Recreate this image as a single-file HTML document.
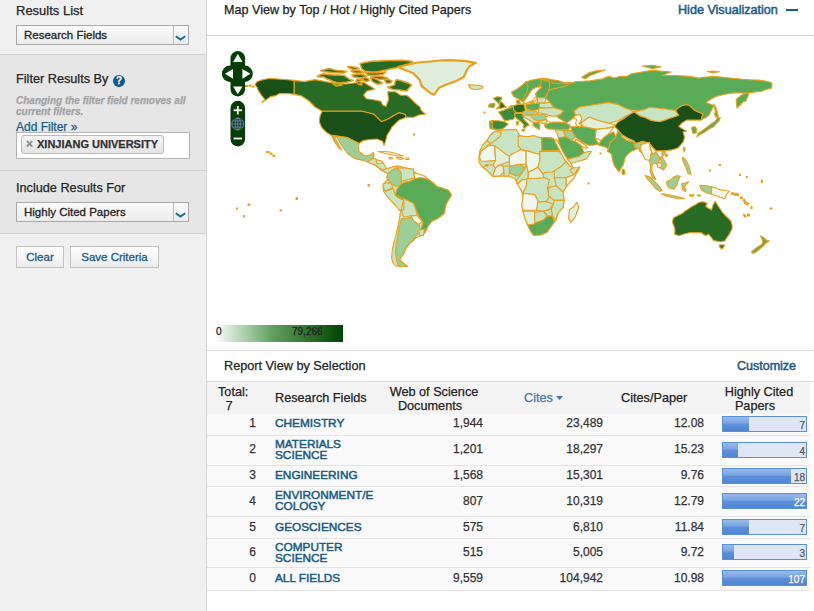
<!DOCTYPE html>
<html><head><meta charset="utf-8">
<style>
*{box-sizing:border-box;margin:0;padding:0}
html,body{width:814px;height:611px;overflow:hidden;background:#fff;font-family:"Liberation Sans",sans-serif;color:#222}
.a{-webkit-text-stroke:0.25px currentColor}
.nb{-webkit-text-stroke:0}
.a{position:absolute;white-space:nowrap}
#side{position:absolute;left:0;top:0;width:207px;height:611px;background:#f0f0f0;border-right:1px solid #d4d4d4}
#filt{position:absolute;left:0;top:54px;width:206px;height:180px;background:#e6e6e6;border-top:1px solid #d2d2d2;border-bottom:1px solid #d2d2d2}
.sep{position:absolute;left:0;width:206px;height:1px;background:#d2d2d2}
.h{font-size:13px;color:#222}
.sel{position:absolute;height:20px;border:1px solid #a9a9a9;background:linear-gradient(#fbfbfb,#ececec)}
.sel .d{position:absolute;top:0;bottom:0;width:1px;background:#bdbdbd}
.sel span{position:absolute;left:7px;top:3px;font-size:11.5px;color:#222;-webkit-text-stroke:0.3px currentColor}
.btn{position:absolute;height:22px;border:1px solid #c2c2c2;background:linear-gradient(#ffffff,#ececec);font-size:11.5px;color:#1a5a86;text-align:center;line-height:20px;-webkit-text-stroke:0.3px currentColor}
.a.lnk{color:#1a5a86;font-weight:normal;-webkit-text-stroke:0.5px currentColor}
</style></head><body>
<div id="side">
  <div class="a h" style="left:16px;top:3px">Results List</div>
  <div class="sel" style="left:16px;top:25px;width:173px"><span>Research Fields</span><div class="d" style="left:156px"></div>
    <svg class="a" style="left:158.4px;top:8.7px" width="11" height="6" viewBox="0 0 11 6"><path d="M0.8 1.2 L5.5 4.6 L10.2 1.2" fill="none" stroke="#1a6a94" stroke-width="2"/></svg></div>
</div>
<div id="filt"></div>
<div class="sep" style="top:170px"></div>
<div class="a h" style="left:16px;top:71.5px;font-size:12.7px">Filter Results By</div>
<div class="a" style="left:113px;top:75px;width:12px;height:12px;border-radius:6px;background:#0d5a8c;color:#fff;font-size:10px;font-weight:bold;text-align:center;line-height:12px">?</div>
<div class="a" style="left:16px;top:95px;font-size:10px;font-weight:bold;font-style:italic;color:#a3a3a3;line-height:11px">Changing the filter field removes all<br>current filters.</div>
<div class="a" style="left:16px;top:120px;font-size:12px;color:#1a5a86">Add Filter »</div>
<div class="a" style="left:16px;top:132px;width:174px;height:27px;background:#fff;border:1px solid #b4b4b4"></div>
<div class="a" style="left:21px;top:135px;width:143px;height:19px;border:1px solid #b9b9b9;border-radius:3px;background:linear-gradient(#f4f4f4,#e4e4e4)"></div>
<div class="a" style="left:26px;top:137px;font-size:12px;font-weight:bold;color:#888">×</div>
<div class="a" style="left:37px;top:138px;font-size:11px;font-weight:bold;color:#333">XINJIANG UNIVERSITY</div>
<div class="a h" style="left:16px;top:181px;font-size:12.7px">Include Results For</div>
<div class="sel" style="left:16px;top:202px;width:173px"><span>Highly Cited Papers</span><div class="d" style="left:156px"></div>
  <svg class="a" style="left:158.4px;top:8.7px" width="11" height="6" viewBox="0 0 11 6"><path d="M0.8 1.2 L5.5 4.6 L10.2 1.2" fill="none" stroke="#1a6a94" stroke-width="2"/></svg></div>
<div class="btn" style="left:16px;top:246px;width:48px">Clear</div>
<div class="btn" style="left:70px;top:246px;width:89px">Save Criteria</div>

<!-- main -->
<div class="a" style="left:224px;top:3px;font-size:12.6px;color:#222">Map View by Top / Hot / Highly Cited Papers</div>
<div class="a lnk" style="left:678px;top:3px;font-size:12.6px">Hide Visualization</div>
<div class="a" style="left:786px;top:9px;width:12px;height:2px;background:#1a5f8a"></div>
<div class="a" style="left:207px;top:35px;width:607px;height:1px;background:#d4d4d4"></div>

<!--MAP-->
<svg class="a" style="left:0;top:0" width="814" height="611" viewBox="0 0 814 611">
<defs><filter id="jag" x="0" y="0" width="814" height="611" filterUnits="userSpaceOnUse"><feTurbulence type="turbulence" baseFrequency="0.4" numOctaves="1" seed="3"/><feDisplacementMap in="SourceGraphic" scale="2" xChannelSelector="R" yChannelSelector="G"/></filter></defs>
<g stroke="#eaa01a" stroke-width="1.1" stroke-linejoin="round">
<path d="M256.6 81.9 L260.0 80.5 L263.3 79.6 L268.0 78.8 L272.0 78.6 L285.0 79.5 L294.2 80.4 L294.2 94.4 L290.0 93.8 L286.9 93.6 L279.5 93.6 L275.0 95.9 L270.6 96.6 L267.7 98.8 L261.8 102.5 L264.7 99.5 L262.0 96.0 L260.3 93.6 L258.0 90.0 L257.4 87.8 L255.0 85.0Z" fill="#1b4f18"/>
<path d="M294.2 80.4 L304.5 81.6 L314.9 79.6 L331.0 82.6 L345.8 84.0 L354.0 83.0 L363.6 82.3 L368.0 85.0 L372.2 87.5 L374.8 89.2 L367.0 90.9 L363.6 95.2 L366.2 98.7 L372.2 99.5 L380.8 101.2 L382.5 104.7 L386.0 106.4 L388.5 99.5 L387.7 91.8 L395.4 91.8 L400.6 95.2 L406.6 95.2 L410.0 97.8 L415.2 103.0 L420.3 107.3 L421.0 110.0 L425.5 114.3 L419.0 115.0 L413.7 117.2 L406.3 117.2 L404.9 114.3 L399.0 112.8 L393.0 116.0 L388.7 118.7 L381.3 121.7 L374.0 114.3 L362.1 111.3 L322.2 111.3 L315.0 107.0 L309.0 101.0 L301.6 95.9 L294.2 94.4Z" fill="#276b25"/>
<path d="M322.2 111.3 L362.1 111.3 L374.0 114.3 L381.3 121.7 L388.7 118.7 L393.0 116.0 L399.0 112.8 L404.9 114.3 L406.3 117.2 L402.0 119.0 L399.0 120.2 L394.5 124.6 L392.0 127.0 L390.1 130.5 L387.2 135.0 L385.5 141.2 L384.0 145.6 L382.6 141.2 L376.7 139.0 L370.0 139.5 L363.4 140.5 L359.0 143.4 L351.6 139.7 L347.2 137.5 L331.0 135.3 L326.5 132.4 L322.0 128.0 L320.6 125.0 L319.3 121.7 L320.0 116.0Z" fill="#1b4f18"/>
<path d="M320.9 70.8 L325.0 69.5 L329.7 68.6 L333.0 69.5 L337.1 70.5 L342.0 70.8 L346.7 71.6 L343.0 73.1 L336.0 72.8 L329.7 72.3 L322.4 71.6Z" fill="#276b25" stroke-width="1.5"/>
<path d="M317.2 76.4 L320.0 74.8 L323.8 73.8 L328.0 74.5 L333.4 74.9 L338.0 75.0 L344.5 75.6 L347.0 77.5 L349.6 79.3 L353.3 80.4 L350.0 81.5 L346.0 82.3 L341.0 82.8 L337.1 83.0 L333.0 81.5 L329.7 80.0 L326.0 78.5 L323.8 77.1 L320.0 77.0Z" fill="#276b25" stroke-width="1.5"/>
<path d="M347.4 66.4 L352.0 66.8 L356.3 67.5 L359.2 68.6 L356.0 69.2 L353.3 69.4 L350.0 68.6Z" fill="#276b25" stroke-width="1.5"/>
<path d="M351.1 70.8 L355.0 70.4 L359.2 70.5 L362.0 71.5 L363.6 72.7 L360.0 73.0 L356.3 73.1 L353.0 72.0Z" fill="#276b25" stroke-width="1.5"/>
<path d="M351.8 74.9 L356.0 74.3 L360.7 74.2 L364.0 75.0 L366.6 76.4 L364.0 77.2 L362.2 77.8 L358.0 77.6 L354.0 77.1Z" fill="#276b25" stroke-width="1.5"/>
<path d="M360.0 63.8 L365.0 62.4 L372.0 61.3 L379.7 60.9 L390.0 60.4 L401.8 60.2 L408.0 60.8 L412.9 61.6 L409.0 64.0 L405.5 66.0 L398.2 67.5 L392.0 68.5 L387.1 69.7 L381.0 71.0 L376.0 72.0 L370.0 71.8 L365.0 71.2 L362.0 69.0Z" fill="#276b25" stroke-width="1.5"/>
<path d="M387.7 87.5 L391.0 86.0 L394.6 84.9 L395.0 82.0 L396.3 79.7 L400.0 80.2 L403.2 81.5 L408.0 83.0 L411.7 84.9 L409.0 88.0 L406.6 90.9 L403.0 90.5 L399.7 90.1 L393.0 89.5Z" fill="#276b25" stroke-width="1.5"/>
<path d="M370.5 77.2 L374.0 78.0 L376.0 79.0 L379.0 81.0 L382.5 83.2 L379.5 84.0 L377.0 84.0 L374.0 82.5 L372.0 81.0Z" fill="#276b25" stroke-width="1.5"/>
<path d="M364.0 77.5 L368.0 78.5 L369.5 80.5 L366.0 81.5 L362.5 80.0Z" fill="#276b25" stroke-width="1.5"/>
<path d="M360.7 78.6 L363.0 79.0 L360.0 82.0 L362.0 85.0 L358.0 84.0 L356.5 81.0Z" fill="#276b25" stroke-width="1.5"/>
<path d="M333.0 84.0 L338.0 83.5 L342.0 85.0 L336.0 86.0Z" fill="#276b25" stroke-width="1.5"/>
<path d="M365.0 72.5 L372.0 72.8 L380.0 72.5 L386.0 72.0 L383.0 74.5 L376.0 75.2 L368.0 75.3Z" fill="#276b25" stroke-width="1.5"/>
<path d="M372.0 76.5 L378.0 76.0 L384.0 77.0 L388.0 78.2 L385.0 79.3 L380.0 79.2 L375.0 78.5Z" fill="#276b25" stroke-width="1.5"/>
<path d="M384.5 79.8 L389.0 79.6 L392.0 81.0 L390.5 83.0 L386.5 83.2Z" fill="#276b25" stroke-width="1.5"/>
<path d="M357.0 79.0 L361.0 79.5 L359.5 81.5 L356.0 81.0Z" fill="#276b25" stroke-width="1.5"/>
<path d="M398.0 67.0 L406.2 64.9 L418.0 62.5 L429.9 61.5 L440.0 60.5 L449.0 60.1 L463.7 60.8 L476.0 62.8 L470.0 66.0 L467.4 68.9 L465.0 74.0 L463.7 77.0 L456.0 81.1 L448.0 84.0 L439.0 87.8 L436.0 92.0 L434.2 94.6 L430.5 93.2 L426.0 89.5 L422.0 86.5 L419.5 79.7 L413.0 73.0 L405.0 70.0Z" fill="#dfeedd" stroke-width="2.2"/>
<path d="M468.3 84.8 L474.2 85.0 L480.0 85.5 L483.0 86.3 L482.0 88.5 L477.0 89.5 L472.8 89.2 L469.5 87.5Z" fill="#c7e4c3"/>
<path d="M331.0 135.3 L347.2 137.5 L351.6 139.7 L359.0 143.4 L358.5 147.0 L359.0 151.5 L364.9 156.0 L368.0 155.5 L370.8 154.5 L373.7 152.3 L374.0 156.0 L372.2 158.9 L367.8 161.9 L363.4 160.4 L356.0 158.9 L350.0 155.5 L347.2 153.0 L342.0 146.0 L336.9 137.5Z" fill="#9ccf98"/>
<path d="M332.0 136.0 L335.0 138.0 L338.0 143.0 L341.3 150.0 L338.0 147.0 L334.0 141.0Z" fill="#9ccf98"/>
<path d="M367.8 161.9 L372.2 158.9 L375.0 158.5 L378.1 160.4 L382.6 161.9 L385.0 166.0 L387.0 169.5 L388.5 172.0 L386.0 172.5 L382.6 170.7 L376.7 166.3 L372.0 164.0Z" fill="#c7e4c3"/>
<path d="M376.0 161.0 L381.0 160.5 L382.6 163.0 L377.0 163.5Z" fill="#f0f7ef"/>
<path d="M378.1 151.5 L385.0 151.5 L390.0 152.0 L396.0 153.5 L403.2 156.0 L397.0 156.0 L392.0 155.0 L385.0 153.5Z" fill="#f0f7ef"/>
<path d="M396.0 157.5 L401.0 157.5 L404.0 158.5 L400.0 159.5Z" fill="#f0f7ef"/>
<path d="M406.0 158.0 L409.0 158.0 L409.0 159.5 L406.0 159.5Z" fill="#f0f7ef"/>
<path d="M389.0 157.5 L393.0 157.8 L392.0 159.0 L389.0 158.8Z" fill="#f0f7ef"/>
<path d="M373.9 163.9 L378.0 167.0 L381.8 170.8 L385.0 169.0 L389.6 167.9 L393.0 166.5 L397.5 165.9 L403.0 167.0 L409.3 168.8 L413.0 171.0 L417.1 173.7 L422.0 176.0 L427.0 178.7 L432.0 182.0 L436.8 186.5 L442.0 188.0 L448.6 190.4 L451.5 195.3 L449.0 199.0 L446.6 203.2 L445.0 208.0 L444.6 213.0 L441.0 216.0 L436.8 218.9 L432.0 221.0 L428.9 224.8 L427.0 228.0 L425.0 232.7 L422.0 235.0 L419.1 236.6 L416.0 238.0 L413.2 240.5 L410.0 243.0 L407.3 246.4 L405.0 250.0 L403.4 254.3 L401.0 257.0 L399.5 260.2 L403.0 263.0 L407.3 266.0 L401.0 266.5 L395.5 266.0 L393.0 263.0 L391.6 258.2 L392.0 253.0 L392.6 248.4 L394.0 242.0 L395.5 236.6 L397.5 228.0 L399.5 218.9 L400.4 211.1 L395.0 205.0 L389.6 199.3 L386.0 195.0 L383.7 191.4 L383.0 188.0 L383.7 185.5 L385.0 182.0 L387.7 179.6 L388.0 176.0 L387.7 173.7 L384.0 171.5Z" fill="#c7e4c3"/>
<path d="M387.8 174.0 L392.0 170.0 L396.4 167.9 L399.0 170.0 L401.3 172.8 L401.3 178.0 L401.3 185.1 L398.0 186.0 L395.2 186.3 L392.5 184.5 L390.3 182.6 L388.5 180.0 L386.6 177.7Z" fill="#9ccf98"/>
<path d="M396.4 167.9 L404.0 168.0 L409.0 168.5 L413.6 169.1 L414.0 173.0 L414.8 177.7 L410.0 179.0 L406.2 180.2 L401.3 181.4 L401.3 172.8 L399.0 170.0Z" fill="#c7e4c3"/>
<path d="M413.6 172.8 L419.0 174.0 L425.8 176.5 L425.8 181.4 L420.0 181.0 L414.8 180.2 L414.8 177.7Z" fill="#f0f7ef"/>
<path d="M382.9 183.9 L386.5 183.0 L390.3 182.6 L392.0 185.5 L392.7 188.8 L389.0 190.0 L385.4 191.2 L383.5 188.0Z" fill="#c7e4c3"/>
<path d="M395.5 195.3 L396.5 190.0 L401.4 183.6 L405.0 182.0 L409.3 181.6 L412.0 180.0 L415.2 178.7 L420.0 177.5 L427.0 178.7 L432.0 182.0 L436.8 186.5 L442.0 188.0 L448.6 190.4 L451.5 195.3 L449.0 199.0 L446.6 203.2 L445.0 208.0 L444.6 213.0 L441.0 216.0 L436.8 218.9 L432.0 221.0 L428.9 224.8 L427.0 228.0 L425.0 232.7 L422.5 230.5 L421.0 228.7 L423.0 222.8 L421.0 219.0 L419.1 217.0 L417.0 212.0 L415.2 207.1 L411.0 204.0 L407.3 201.2 L404.0 200.0 L401.4 199.3 L398.0 197.5Z" fill="#5aab58"/>
<path d="M401.4 218.9 L406.0 218.5 L411.2 217.0 L415.0 220.5 L419.1 224.8 L420.0 229.0 L419.1 232.0 L416.0 236.0 L413.2 240.5 L410.0 243.0 L407.3 246.4 L405.0 250.0 L403.4 254.3 L401.0 257.0 L399.5 260.2 L403.0 263.0 L407.3 266.0 L401.0 266.5 L398.0 265.0 L396.5 259.0 L395.5 252.3 L396.0 245.0 L397.5 238.6 L399.0 228.0Z" fill="#9ccf98"/>
<path d="M403.8 198.6 L408.0 200.5 L413.6 203.5 L415.5 209.0 L417.3 215.8 L411.1 215.8 L407.0 216.5 L403.8 217.0 L402.0 213.0 L401.3 209.6Z" fill="#c7e4c3"/>
<path d="M411.1 215.8 L417.3 215.8 L420.0 219.0 L422.2 221.9 L418.5 224.3 L416.0 222.5 L413.6 220.7Z" fill="#f0f7ef"/>
<path d="M418.5 230.5 L421.0 229.8 L424.6 229.2 L423.4 235.4 L421.0 235.6 L419.7 235.4Z" fill="#c7e4c3"/>
<path d="M511.4 92.2 L516.2 89.6 L522.2 85.3 L525.6 81.9 L533.4 79.7 L541.1 78.4 L548.0 78.9 L556.6 81.0 L565.2 82.7 L570.3 82.3 L568.5 84.8 L561.1 87.3 L555.0 88.5 L548.9 90.2 L548.9 91.3 L546.3 94.8 L545.4 97.9 L537.7 97.4 L536.8 99.1 L533.4 102.5 L528.2 102.5 L524.8 103.4 L521.3 100.8 L518.8 99.1 L513.6 96.5Z" fill="#5aab58"/>
<path d="M524.5 103.8 L528.0 102.5 L531.0 101.5 L534.0 100.0 L536.5 97.0 L535.5 93.5 L538.0 90.5 L542.0 87.0 L540.5 86.2 L535.5 87.5 L531.5 90.0 L529.0 93.9 L526.5 98.0 L523.5 101.7Z" fill="#ffffff"/>
<path d="M533.4 102.5 L536.8 99.1 L537.7 97.4 L535.5 97.0 L533.0 100.0Z" fill="#ffffff"/>
<path d="M536.8 97.9 L541.0 97.5 L545.4 97.9 L545.8 100.0 L544.6 103.1 L539.4 103.1 L536.8 103.1 L537.7 100.0Z" fill="#c7e4c3"/>
<path d="M539.4 103.1 L544.6 103.1 L549.7 102.2 L554.0 107.4 L547.0 108.0 L539.4 107.4Z" fill="#c7e4c3"/>
<path d="M525.6 104.8 L532.0 103.6 L539.4 103.1 L539.4 109.1 L533.4 110.8 L526.5 109.1Z" fill="#5aab58"/>
<path d="M538.5 108.2 L547.0 108.0 L554.0 107.4 L561.7 110.0 L563.5 110.8 L560.9 114.2 L556.6 116.0 L553.2 116.8 L549.0 115.5 L545.4 114.2 L538.5 112.5Z" fill="#c7e4c3"/>
<path d="M516.5 100.3 L519.0 100.0 L520.5 103.3 L517.0 103.8Z" fill="#5aab58"/>
<path d="M500.9 97.1 L502.0 99.0 L499.7 100.8 L502.0 102.5 L504.6 105.7 L506.4 106.9 L502.0 108.0 L496.0 108.8 L499.7 105.7 L498.5 103.5 L497.2 102.0 L495.5 100.5 L493.5 98.3 L497.0 96.8Z" fill="#3d8b3b"/>
<path d="M499.5 102.0 L502.0 102.5 L504.6 105.7 L506.4 106.9 L502.0 108.0 L498.5 108.0 L500.0 105.0Z" fill="#276b25"/>
<path d="M489.8 103.9 L494.7 103.3 L495.0 105.5 L493.5 107.6 L488.6 106.9 L488.8 105.0Z" fill="#5aab58"/>
<path d="M498.4 111.9 L503.0 110.5 L508.3 108.2 L513.6 106.5 L516.2 113.4 L514.5 117.7 L513.2 119.2 L508.0 120.2 L504.6 120.5 L503.0 118.5 L502.1 116.8 L500.0 114.0Z" fill="#3d8b3b"/>
<path d="M508.3 108.2 L511.0 105.5 L513.6 105.6 L513.6 106.5Z" fill="#5aab58"/>
<path d="M513.6 105.6 L518.0 104.5 L523.9 103.9 L525.6 110.8 L522.2 112.5 L516.2 112.5 L513.6 109.9Z" fill="#276b25"/>
<path d="M516.2 112.5 L522.2 112.5 L525.6 110.8 L533.4 110.8 L538.5 112.5 L537.7 114.2 L530.0 115.0 L522.0 115.5 L515.3 114.5Z" fill="#9ccf98"/>
<path d="M530.0 115.0 L537.7 114.2 L545.4 114.2 L546.3 119.4 L539.4 121.1 L534.0 119.5Z" fill="#9ccf98"/>
<path d="M522.0 115.5 L530.0 115.0 L534.0 119.5 L539.4 121.1 L538.5 122.8 L533.4 122.8 L527.4 119.0 L523.9 117.0Z" fill="#c7e4c3"/>
<path d="M539.4 121.1 L546.3 119.4 L547.1 121.1 L545.4 123.7 L538.5 122.8Z" fill="#c7e4c3"/>
<path d="M533.4 122.8 L538.5 122.8 L540.0 125.0 L539.4 129.7 L535.0 127.0 L533.0 125.0Z" fill="#5aab58"/>
<path d="M514.5 113.4 L522.2 113.4 L523.0 116.0 L523.9 119.4 L527.4 122.8 L529.1 125.4 L526.5 126.3 L524.5 128.5 L523.0 127.0 L524.0 125.0 L521.3 122.0 L518.0 119.5 L515.3 116.8Z" fill="#3d8b3b"/>
<path d="M521.5 130.0 L525.0 129.5 L523.5 131.5Z" fill="#3d8b3b"/>
<path d="M516.5 121.5 L518.2 121.5 L518.0 125.0 L516.5 124.5Z" fill="#3d8b3b"/>
<path d="M491.0 120.5 L498.0 120.8 L504.6 121.7 L508.3 124.1 L505.0 127.0 L502.1 129.1 L497.0 129.5 L493.5 129.1 L492.2 127.0 L492.5 122.5Z" fill="#3d8b3b"/>
<path d="M489.5 121.0 L492.5 122.5 L492.2 127.0 L493.5 129.1 L490.0 128.7 L489.5 125.0Z" fill="#5aab58"/>
<path d="M545.5 117.0 L549.0 115.8 L553.0 116.2 L556.6 116.0 L559.0 117.5 L562.0 119.5 L565.5 121.5 L562.0 122.5 L557.0 122.3 L552.0 122.5 L548.0 121.8 L546.5 120.0Z" fill="#ffffff"/>
<path d="M544.6 124.6 L548.0 123.5 L553.2 122.0 L560.0 122.2 L565.2 122.8 L570.3 125.4 L568.6 129.7 L566.9 129.4 L560.0 129.5 L554.6 129.4 L548.0 128.9 L545.0 127.0Z" fill="#5aab58"/>
<path d="M540.0 78.9 L547.0 81.0 L554.7 83.3 L560.0 83.8 L569.5 83.3 L577.0 81.5 L580.0 81.5 L590.3 80.7 L602.4 78.9 L605.8 77.2 L609.3 76.4 L614.4 78.1 L619.6 76.4 L626.5 76.4 L631.6 73.8 L642.0 72.0 L652.3 70.3 L662.6 71.2 L671.2 72.0 L666.0 74.0 L662.6 75.5 L676.4 75.5 L690.2 76.4 L698.8 78.1 L703.9 77.2 L714.2 76.4 L725.0 77.5 L735.0 78.5 L742.6 79.3 L750.0 79.8 L758.6 80.1 L765.0 81.0 L771.4 82.5 L772.0 85.0 L771.4 88.1 L766.0 89.5 L761.8 91.3 L755.0 92.0 L749.0 92.9 L745.8 92.9 L741.0 95.5 L736.2 99.3 L736.5 104.0 L737.0 108.1 L740.0 105.0 L743.0 102.0 L745.8 100.9 L748.0 96.0 L749.0 93.5 L742.0 93.0 L734.6 92.9 L726.0 94.0 L717.0 96.1 L712.0 98.5 L705.9 102.5 L710.0 104.0 L713.9 105.7 L711.0 111.0 L709.0 115.3 L705.0 118.0 L701.1 120.1 L702.7 113.7 L698.0 112.0 L694.7 110.5 L691.0 107.0 L688.3 104.9 L685.0 105.0 L681.9 105.7 L678.0 108.0 L675.6 110.5 L665.0 109.0 L650.0 107.3 L643.2 109.9 L638.0 110.5 L630.0 109.7 L625.8 108.5 L618.5 104.8 L608.6 102.4 L593.9 104.8 L579.1 107.3 L574.2 111.0 L575.5 114.7 L579.1 115.9 L580.0 118.0 L576.0 116.5 L574.2 117.1 L571.0 120.0 L566.9 122.6 L565.2 122.0 L562.0 120.0 L558.3 117.7 L556.6 116.0 L560.9 114.2 L563.5 110.8 L561.7 110.0 L554.0 107.4 L549.7 102.2 L545.4 97.9 L547.1 94.5 L548.9 90.2 L555.0 88.5 L561.1 87.3 L565.0 86.0 L568.5 84.8 L563.5 82.4 L558.0 80.5Z" fill="#5aab58"/>
<path d="M581.7 77.2 L588.6 72.9 L595.0 71.0 L605.0 70.0 L598.0 72.5 L590.3 75.5 L585.2 78.9Z" fill="#5aab58"/>
<path d="M642.0 66.0 L652.3 65.2 L660.9 66.9 L652.3 68.6Z" fill="#5aab58"/>
<path d="M707.4 71.5 L713.0 71.0 L719.4 71.8 L713.0 73.0Z" fill="#5aab58"/>
<path d="M713.9 104.1 L716.0 108.0 L717.5 113.0 L718.7 120.1 L716.0 116.0 L715.0 110.0Z" fill="#5aab58"/>
<path d="M574.2 111.0 L579.1 107.3 L593.9 104.8 L608.6 102.4 L618.5 104.8 L625.8 108.5 L630.0 109.7 L634.4 112.0 L630.0 114.5 L625.8 115.9 L618.5 120.8 L608.6 123.3 L598.8 120.8 L589.0 117.1 L584.1 120.8 L580.4 123.3 L579.1 115.9 L575.5 114.7Z" fill="#c7e4c3"/>
<path d="M575.5 115.3 L580.4 114.7 L581.6 119.6 L579.1 123.3 L582.8 126.9 L581.6 128.8 L577.9 127.6 L575.5 123.3 L576.7 119.6 L573.6 117.7Z" fill="#ffffff"/>
<path d="M584.1 120.8 L589.0 117.1 L598.8 120.8 L608.6 123.3 L614.5 124.6 L614.5 126.2 L606.2 128.2 L596.3 129.4 L590.0 128.0 L584.1 126.9 L580.4 123.3Z" fill="#e0f0dd"/>
<path d="M634.4 112.0 L638.0 110.5 L643.2 109.9 L650.0 107.3 L665.0 109.0 L675.6 110.5 L678.7 115.3 L674.0 117.0 L669.2 118.5 L664.0 120.5 L659.6 121.7 L654.0 121.0 L650.0 120.1 L645.0 117.5 L639.6 115.9Z" fill="#c7e4c3"/>
<path d="M614.5 126.2 L618.0 122.0 L623.4 118.8 L628.0 115.5 L632.2 112.9 L634.4 112.0 L639.6 115.9 L645.0 117.5 L650.0 120.1 L654.0 121.0 L659.6 121.7 L664.0 120.5 L669.2 118.5 L674.0 117.0 L678.7 115.3 L675.6 110.5 L678.0 108.0 L681.9 105.7 L685.0 105.0 L688.3 104.9 L691.0 107.0 L694.7 110.5 L698.0 112.0 L702.7 113.7 L701.1 120.1 L694.0 120.0 L686.7 120.1 L682.0 123.0 L678.7 126.4 L682.0 128.5 L686.7 131.2 L683.0 132.0 L683.6 133.8 L684.5 137.0 L683.5 141.4 L681.0 144.5 L678.2 147.8 L675.0 149.0 L671.8 149.9 L667.0 150.5 L662.2 151.0 L655.9 151.0 L653.0 148.0 L650.5 144.6 L647.0 142.5 L643.1 141.4 L639.0 142.5 L635.6 143.5 L633.7 141.0 L628.0 138.5 L621.9 135.1 L618.0 130.0Z" fill="#1b4f18"/>
<path d="M691.5 127.5 L695.0 126.5 L696.5 129.0 L696.3 132.8 L693.0 133.5 L692.0 130.5Z" fill="#5aab58"/>
<path d="M720.3 117.5 L719.0 121.0 L716.0 124.0 L713.9 126.4 L710.0 128.5 L704.2 132.4 L700.0 134.5 L696.9 136.8 L697.5 134.0 L701.0 131.5 L706.0 128.0 L711.0 124.0 L715.0 121.5 L717.5 118.0Z" fill="#5aab58"/>
<path d="M714.5 113.5 L717.0 112.0 L718.0 116.0 L715.5 117.0Z" fill="#5aab58"/>
<path d="M683.5 147.2 L685.0 148.0 L684.6 151.5 L683.2 150.5Z" fill="#5aab58"/>
<path d="M665.5 154.5 L667.5 154.5 L667.0 156.5 L665.5 156.0Z" fill="#5aab58"/>
<path d="M563.2 130.6 L571.8 130.6 L575.5 136.8 L571.8 140.5 L565.6 136.8Z" fill="#9ccf98"/>
<path d="M554.6 129.4 L563.2 130.6 L565.6 136.8 L558.3 138.0 L557.0 133.0Z" fill="#c7e4c3"/>
<path d="M570.5 126.9 L577.0 126.5 L584.1 126.9 L590.0 128.0 L596.3 129.4 L595.1 138.0 L598.8 144.1 L594.0 145.0 L589.0 145.4 L585.0 143.5 L581.6 141.7 L578.0 139.0 L575.5 136.8 L571.8 130.6Z" fill="#5aab58"/>
<path d="M596.3 129.4 L606.2 128.2 L608.6 128.2 L614.5 126.2 L608.6 134.3 L604.0 137.5 L601.3 140.5 L595.1 138.0Z" fill="#f0f7ef"/>
<path d="M601.3 140.5 L604.0 137.5 L608.6 134.3 L613.5 131.9 L616.0 136.8 L609.9 142.9 L608.6 149.0 L604.0 146.5 L598.8 145.4 L598.8 144.1Z" fill="#5aab58"/>
<path d="M616.0 136.8 L618.0 130.0 L621.9 135.1 L628.0 138.5 L633.7 141.0 L635.6 143.5 L638.8 147.8 L635.2 149.8 L632.0 151.0 L629.3 152.8 L626.0 156.0 L624.9 158.7 L623.4 164.5 L621.0 168.5 L619.0 171.9 L616.5 168.5 L614.5 166.0 L612.5 160.0 L611.6 154.2 L609.5 152.5 L607.2 151.3 L608.6 149.0 L609.9 142.9Z" fill="#5aab58"/>
<path d="M621.9 135.1 L628.0 138.5 L633.7 141.0 L633.0 142.0 L627.0 140.5 L621.5 137.0Z" fill="#c7e4c3"/>
<path d="M633.7 142.4 L636.0 143.5 L638.8 147.8 L636.0 148.5 L634.5 146.0Z" fill="#9ccf98"/>
<path d="M622.5 169.0 L624.5 170.0 L625.0 174.0 L622.5 174.5 L622.0 171.5Z" fill="#5aab58"/>
<path d="M558.3 138.0 L565.6 136.8 L571.8 140.5 L576.7 141.7 L579.0 143.5 L581.6 146.6 L584.1 152.7 L579.1 156.4 L575.0 157.5 L570.5 158.9 L566.9 158.9 L563.0 152.5 L559.5 147.8Z" fill="#5aab58"/>
<path d="M568.1 158.9 L575.0 157.5 L579.1 156.4 L584.1 152.7 L588.0 151.5 L591.4 151.5 L589.0 155.0 L586.5 158.9 L578.0 161.5 L570.5 163.8Z" fill="#c7e4c3"/>
<path d="M575.5 139.3 L579.0 140.5 L583.0 143.5 L586.5 146.6 L584.5 147.5 L581.0 144.5 L577.0 141.5Z" fill="#ffffff"/>
<path d="M641.0 144.6 L645.5 143.0 L649.5 142.4 L650.5 148.8 L652.7 154.1 L651.0 157.5 L649.5 160.5 L647.5 160.0 L645.2 159.5 L643.5 156.0 L642.0 153.1 L640.0 149.0Z" fill="#f0f7ef"/>
<path d="M650.5 154.1 L655.9 152.0 L658.0 155.0 L660.1 158.4 L658.5 162.0 L658.0 164.8 L653.7 162.7 L652.0 166.0 L651.6 170.1 L653.5 175.0 L655.9 179.7 L653.0 178.5 L651.6 175.4 L650.0 171.0 L650.5 165.9 L649.5 160.5 L651.0 157.5Z" fill="#9ccf98"/>
<path d="M652.7 148.5 L655.9 151.0 L658.5 152.0 L660.1 156.0 L660.1 159.5 L658.0 155.0 L655.9 152.0Z" fill="#f0f7ef"/>
<path d="M662.2 151.0 L666.0 152.0 L664.0 155.0 L662.0 156.0 L663.0 158.5 L664.4 160.5 L666.5 164.8 L665.0 168.0 L663.3 170.1 L660.1 168.0 L662.2 165.9 L661.5 162.0 L660.1 158.4 L660.0 155.5Z" fill="#9ccf98"/>
<path d="M656.9 163.7 L660.5 162.0 L662.2 165.9 L660.1 168.0 L657.5 167.0Z" fill="#e0f0dd"/>
<path d="M645.2 175.4 L650.0 177.0 L652.7 179.7 L656.0 183.0 L659.0 186.1 L662.2 190.3 L660.1 191.4 L656.0 189.0 L652.7 185.0 L649.0 181.0 L646.3 177.6Z" fill="#9ccf98"/>
<path d="M661.2 193.5 L668.0 194.5 L678.2 196.7 L684.6 198.8 L679.0 198.8 L667.6 196.7Z" fill="#9ccf98"/>
<path d="M666.5 181.8 L670.7 179.7 L674.0 177.0 L677.1 175.4 L680.3 176.5 L678.0 181.0 L677.1 185.0 L675.0 187.5 L673.9 189.3 L670.0 188.5 L668.6 187.1 L666.8 184.5Z" fill="#9ccf98"/>
<path d="M681.4 183.9 L685.0 183.0 L688.8 181.8 L686.0 184.5 L684.6 187.1 L686.0 189.5 L685.6 191.4 L683.0 190.0 L682.4 188.0 L682.0 186.0Z" fill="#9ccf98"/>
<path d="M682.4 157.3 L685.6 159.5 L687.0 162.0 L688.8 165.9 L690.0 170.0 L691.0 174.4 L687.8 173.3 L686.5 168.5 L684.6 164.8 L683.0 161.0Z" fill="#9ccf98"/>
<path d="M699.8 185.4 L705.0 185.5 L711.6 186.9 L711.6 194.3 L707.0 193.0 L701.3 189.9Z" fill="#9ccf98"/>
<path d="M711.6 186.9 L716.0 188.0 L720.4 189.9 L725.0 190.5 L729.3 191.3 L726.5 194.0 L724.9 198.7 L720.0 197.0 L716.0 195.8 L711.6 194.3Z" fill="#f0f7ef"/>
<path d="M690.0 194.5 L694.0 194.8 L693.0 196.5 L689.5 196.0Z" fill="#9ccf98"/>
<path d="M697.0 195.0 L700.5 195.0 L699.5 196.5Z" fill="#9ccf98"/>
<path d="M732.0 192.5 L738.0 194.0 L736.0 195.5 L731.0 194.0Z" fill="#9ccf98"/>
<path d="M745.0 201.0 L749.0 204.0 L747.0 205.0 L744.0 202.5Z" fill="#9ccf98"/>
<path d="M743.5 214.0 L746.0 216.5 L744.5 217.0Z" fill="#9ccf98"/>
<path d="M673.3 218.0 L677.0 216.0 L682.1 213.6 L685.0 211.0 L688.0 209.2 L692.0 206.5 L695.4 204.7 L698.0 203.0 L701.3 201.8 L704.0 202.0 L707.2 203.3 L705.7 206.2 L708.0 208.0 L711.6 209.9 L713.0 205.0 L715.3 201.1 L717.5 205.0 L720.4 209.2 L722.5 212.5 L724.9 215.1 L728.0 218.0 L730.8 221.0 L732.0 224.5 L732.2 228.3 L731.0 231.0 L729.3 234.2 L727.0 237.5 L724.9 240.9 L722.0 241.5 L719.0 241.6 L716.0 241.0 L713.1 240.1 L711.0 237.0 L708.6 234.2 L705.7 235.7 L703.0 234.0 L701.3 232.8 L696.0 232.5 L689.5 232.8 L684.0 234.0 L679.2 235.7 L677.0 235.0 L674.7 234.2 L675.0 231.0 L674.7 228.3 L673.5 225.0 L672.5 222.4Z" fill="#276b25"/>
<path d="M719.0 245.0 L722.0 244.8 L724.9 245.3 L723.0 248.0 L721.9 249.0 L720.0 247.5Z" fill="#276b25"/>
<path d="M760.3 235.7 L764.0 238.0 L766.0 240.0 L769.1 240.9 L766.0 243.0 L763.2 246.0 L759.0 249.5 L756.0 252.0 L752.9 253.4 L751.4 251.9 L755.0 249.0 L758.5 246.5 L761.7 244.5 L763.0 241.0Z" fill="#5aab58"/>
<path d="M490.7 134.8 L495.6 130.9 L504.5 129.9 L516.3 129.4 L518.2 132.9 L520.2 135.8 L527.1 136.8 L534.0 135.8 L539.9 137.8 L541.8 137.8 L550.0 137.5 L554.0 139.0 L556.0 143.0 L558.5 147.5 L560.0 151.5 L563.0 156.5 L565.8 161.9 L569.0 165.0 L573.2 167.8 L577.0 167.5 L579.9 167.0 L577.0 172.0 L574.0 177.8 L570.0 182.0 L566.1 186.6 L563.2 192.5 L564.1 200.4 L563.2 207.3 L560.0 210.5 L557.3 214.1 L556.3 220.0 L554.5 221.5 L551.6 226.0 L547.2 231.9 L541.3 234.8 L537.0 235.2 L533.9 235.5 L531.0 231.9 L528.0 226.0 L525.1 218.6 L522.9 211.2 L521.9 206.3 L522.9 195.5 L520.9 189.6 L517.0 182.7 L517.3 184.0 L515.3 179.0 L508.4 176.1 L499.6 176.1 L492.7 176.1 L486.8 170.2 L482.9 167.3 L478.9 162.3 L478.9 157.4 L479.9 150.6 L482.9 144.7 L486.8 140.7Z" fill="#c7e4c3"/>
<path d="M490.7 134.8 L495.6 130.9 L501.5 132.9 L499.6 136.8 L495.0 140.5 L490.7 143.7 L486.8 140.7Z" fill="#c7e4c3"/>
<path d="M490.7 143.7 L486.8 145.6 L494.7 145.6 L495.6 160.4 L485.8 161.4 L480.9 161.0 L479.5 157.0 L480.9 151.5Z" fill="#f0f7ef"/>
<path d="M494.7 145.6 L506.4 154.5 L509.4 156.4 L509.4 161.4 L498.6 165.3 L495.6 168.2 L493.0 165.0 L495.6 160.4Z" fill="#e0f0dd"/>
<path d="M511.4 154.5 L521.2 149.6 L526.1 150.6 L526.1 164.3 L520.2 164.3 L509.4 166.3 L509.4 156.4Z" fill="#f0f7ef"/>
<path d="M518.2 135.8 L527.1 136.8 L534.0 135.8 L539.9 137.8 L541.8 137.8 L541.8 150.6 L539.9 151.5 L539.9 154.5 L526.1 150.6 L521.2 149.6 L518.2 145.6Z" fill="#c7e4c3"/>
<path d="M526.1 150.6 L539.9 154.5 L540.0 160.0 L537.9 167.3 L533.0 170.0 L528.1 172.2 L526.1 164.3Z" fill="#f0f7ef"/>
<path d="M541.8 137.8 L550.0 137.5 L554.0 139.0 L556.0 143.0 L558.5 147.5 L559.5 150.6 L541.8 150.6Z" fill="#5aab58"/>
<path d="M539.9 151.5 L559.5 151.5 L563.0 156.5 L565.8 161.9 L562.0 166.0 L556.0 170.0 L552.0 172.0 L545.0 172.5 L542.8 174.1 L537.9 167.3 L540.0 160.0Z" fill="#c7e4c3"/>
<path d="M528.1 172.2 L533.0 170.0 L537.9 167.3 L542.8 174.1 L543.8 178.0 L536.0 178.5 L528.0 178.8Z" fill="#e0f0dd"/>
<path d="M509.4 166.3 L520.2 164.3 L525.1 168.2 L523.0 171.5 L521.2 174.1 L516.3 176.1 L509.4 173.1Z" fill="#9ccf98"/>
<path d="M482.9 167.3 L486.8 165.0 L493.0 165.0 L495.6 168.2 L492.7 176.1 L486.8 170.2Z" fill="#c7e4c3"/>
<path d="M495.6 168.2 L498.6 165.3 L503.0 166.0 L504.0 172.0 L499.6 176.1 L492.7 176.1Z" fill="#e0f0dd"/>
<path d="M503.0 166.0 L509.4 166.3 L509.4 173.1 L508.4 176.1 L504.0 176.1 L504.0 172.0Z" fill="#c7e4c3"/>
<path d="M521.2 174.1 L525.1 168.2 L526.1 164.3 L528.1 172.2 L528.0 178.8 L522.0 180.0 L517.3 184.0 L516.5 180.0Z" fill="#c7e4c3"/>
<path d="M517.3 184.0 L522.0 180.0 L528.0 178.8 L526.8 185.0 L522.9 193.5 L520.9 189.6Z" fill="#e0f0dd"/>
<path d="M554.3 170.9 L562.0 166.0 L565.8 161.9 L569.0 165.0 L573.2 167.8 L570.0 170.0 L574.0 174.8 L566.1 177.8 L564.1 177.8 L554.3 177.8Z" fill="#c7e4c3"/>
<path d="M566.1 177.8 L574.0 174.8 L577.0 170.0 L579.9 167.0 L577.0 172.0 L574.0 177.8 L570.0 182.0 L566.1 186.6Z" fill="#f0f7ef"/>
<path d="M554.3 177.8 L564.1 177.8 L566.1 177.8 L566.1 186.6 L563.2 192.5 L556.3 185.6Z" fill="#c7e4c3"/>
<path d="M526.8 178.8 L536.0 178.5 L544.5 177.8 L549.4 179.7 L547.4 188.6 L549.4 196.4 L546.4 201.4 L538.6 202.3 L534.7 194.5 L522.9 193.5 L526.8 185.0Z" fill="#c7e4c3"/>
<path d="M548.4 187.6 L556.3 185.6 L563.2 192.5 L564.1 200.4 L554.3 200.4 L548.4 195.5Z" fill="#c7e4c3"/>
<path d="M522.9 193.5 L534.7 194.5 L538.6 202.3 L536.6 210.2 L522.9 210.2 L521.9 206.3 L522.9 195.5Z" fill="#f0f7ef"/>
<path d="M537.6 202.3 L546.4 201.4 L553.3 204.3 L549.4 209.2 L543.5 211.2 L536.6 210.2Z" fill="#c7e4c3"/>
<path d="M554.3 200.4 L564.1 200.4 L563.2 207.3 L557.3 214.1 L556.3 220.0 L552.3 216.1 L551.4 209.2 L553.3 204.3Z" fill="#c7e4c3"/>
<path d="M522.9 211.2 L534.7 211.2 L534.7 224.0 L527.8 225.0 L525.1 218.6Z" fill="#e0f0dd"/>
<path d="M534.7 212.2 L543.5 211.2 L547.4 216.1 L543.5 220.0 L534.7 223.0Z" fill="#c7e4c3"/>
<path d="M543.5 211.2 L551.4 209.2 L552.3 216.1 L547.4 216.1Z" fill="#c7e4c3"/>
<path d="M527.8 225.0 L534.7 224.0 L534.7 223.0 L543.5 220.0 L547.4 216.1 L552.3 216.1 L554.5 221.5 L551.6 226.0 L547.2 231.9 L541.3 234.8 L537.0 235.2 L533.9 235.5 L531.0 231.9Z" fill="#5aab58"/>
<path d="M576.7 202.4 L578.9 206.8 L577.0 212.0 L575.2 217.1 L573.0 220.0 L570.8 222.3 L568.6 218.6 L569.0 214.0 L569.3 209.7 L573.7 206.8Z" fill="#e0f0dd"/>
<path d="M554.5 139.5 L556.5 140.0 L559.5 145.0 L562.0 150.0 L565.0 155.5 L568.0 160.0 L571.0 163.5 L572.5 166.0 L570.5 166.5 L567.5 163.0 L564.0 158.5 L561.0 153.0 L558.5 148.0 L555.5 142.5Z" fill="#ffffff"/>
<path d="M575.0 139.5 L578.5 140.5 L582.0 143.0 L585.5 145.5 L587.5 147.5 L586.0 148.5 L582.5 146.5 L578.5 143.5 L575.5 141.5Z" fill="#ffffff"/>
<path d="M633.7 141.0 L635.6 143.5 L639.0 142.5 L643.1 141.4 L645.5 143.0 L641.0 144.6 L640.0 149.0 L642.0 153.1 L639.5 151.0 L638.8 147.8 L636.0 148.5 L634.5 146.0Z" fill="#9ccf98"/>
<path d="M650.5 144.6 L653.0 148.0 L655.9 151.0 L662.2 151.0 L662.0 156.0 L660.1 158.4 L658.0 155.0 L655.9 152.0 L652.7 154.1 L650.5 148.8Z" fill="#f0f7ef"/>
<path d="M245.5 85.5 L247.5 85.5 L247.5 86.5 L245.5 86.5Z" fill="#eaa01a"/>
<path d="M249.0 85.0 L251.0 85.0 L251.0 86.2 L249.0 86.2Z" fill="#eaa01a"/>
<path d="M252.5 86.0 L254.0 86.0 L254.0 87.0 L252.5 87.0Z" fill="#eaa01a"/>
<path d="M266.5 151.5 L269.0 151.5 L269.0 152.5 L266.5 152.5Z" fill="#eaa01a"/>
<path d="M270.0 153.0 L272.0 153.0 L272.0 154.2 L270.0 154.2Z" fill="#eaa01a"/>
<path d="M273.0 155.0 L274.5 155.0 L274.5 156.5 L273.0 156.5Z" fill="#eaa01a"/>
<path d="M296.0 197.5 L297.5 197.5 L297.5 199.5 L296.0 199.5Z" fill="#eaa01a"/>
<path d="M248.0 204.0 L250.0 204.0 L250.0 205.2 L248.0 205.2Z" fill="#eaa01a"/>
<path d="M236.5 208.0 L237.5 208.0 L237.5 209.0 L236.5 209.0Z" fill="#eaa01a"/>
<path d="M243.3 215.5 L244.3 215.5 L244.3 217.0 L243.3 217.0Z" fill="#eaa01a"/>
<path d="M280.0 210.0 L281.5 210.0 L281.5 211.0 L280.0 211.0Z" fill="#eaa01a"/>
<path d="M368.0 184.5 L369.5 184.5 L369.5 186.0 L368.0 186.0Z" fill="#eaa01a"/>
<path d="M719.0 164.5 L720.5 164.5 L720.5 165.5 L719.0 165.5Z" fill="#eaa01a"/>
<path d="M709.4 170.0 L710.4 170.0 L710.4 171.0 L709.4 171.0Z" fill="#eaa01a"/>
<path d="M739.6 174.4 L740.6 174.4 L740.6 175.4 L739.6 175.4Z" fill="#eaa01a"/>
<path d="M746.3 176.6 L747.3 176.6 L747.3 177.6 L746.3 177.6Z" fill="#eaa01a"/>
<path d="M761.3 180.0 L762.3 180.0 L762.3 182.5 L761.3 182.5Z" fill="#eaa01a"/>
<path d="M736.7 194.0 L738.7 194.0 L738.7 195.5 L736.7 195.5Z" fill="#eaa01a"/>
<path d="M740.5 197.0 L742.5 197.0 L742.5 198.5 L740.5 198.5Z" fill="#eaa01a"/>
<path d="M743.5 199.5 L745.0 199.5 L745.0 201.0 L743.5 201.0Z" fill="#eaa01a"/>
<path d="M751.0 206.5 L752.0 206.5 L752.0 208.5 L751.0 208.5Z" fill="#eaa01a"/>
<path d="M747.5 214.0 L749.5 214.0 L749.5 216.0 L747.5 216.0Z" fill="#eaa01a"/>
<path d="M770.0 208.0 L772.0 208.0 L772.0 209.0 L770.0 209.0Z" fill="#eaa01a"/>
<path d="M413.5 134.0 L414.5 134.0 L414.5 135.0 L413.5 135.0Z" fill="#eaa01a"/>
<path d="M484.0 112.0 L485.0 112.0 L485.0 113.0 L484.0 113.0Z" fill="#eaa01a"/>
<path d="M486.0 164.5 L487.5 164.5 L487.5 166.0 L486.0 166.0Z" fill="#eaa01a"/>
<path d="M588.0 183.0 L589.0 183.0 L589.0 184.0 L588.0 184.0Z" fill="#eaa01a"/>
<path d="M600.0 153.0 L601.0 153.0 L601.0 154.0 L600.0 154.0Z" fill="#eaa01a"/>
<path fill="none" d="M385.4 191.2 L392.7 187.5 L395.2 194.9 L403.8 198.6 L403.8 209.6 L400 210.5"/>
<path fill="none" d="M525.6 81.9 L528 86 L527 92 L524 98 L521.3 100.8"/>
<path fill="none" d="M541.1 78.4 L541 83 L538.5 87.9"/>
<path fill="none" d="M548 78.9 L549.7 84 L548.9 91.3"/>
</g>
<g fill="#063d06">
<rect x="230.5" y="51" width="14.6" height="45.5" rx="7.3"/>
<rect x="221.9" y="65.6" width="30.9" height="16.3" rx="8.1"/>
<rect x="230.5" y="100.8" width="14.6" height="45.6" rx="7.3"/>
</g>
<g fill="#fff">
<path d="M237.8 54.1 L242.5 62 L233.1 62Z"/>
<path d="M237.8 94.3 L242.5 86.6 L233.1 86.6Z"/>
<path d="M225 73.8 L233 68.9 L233 78.7Z"/>
<path d="M250.4 73.8 L242.4 68.9 L242.4 78.7Z"/>
<rect x="233.6" y="109.4" width="8.4" height="1.8"/>
<rect x="236.9" y="106.1" width="1.8" height="8.4"/>
<rect x="233.6" y="137.6" width="8.4" height="1.8"/>
</g>
<g fill="none" stroke="#8a8ae8" stroke-width="0.7">
<circle cx="237.8" cy="124" r="6"/>
<ellipse cx="237.8" cy="124" rx="2.6" ry="6"/>
<path d="M231.8 124 H243.8 M232.8 121 H242.8 M232.8 127 H242.8 M237.8 118 V130"/>
</g>
</svg>
<!--/MAP-->

<div class="a" style="left:215px;top:325px;width:128px;height:17px;background:linear-gradient(90deg,#ffffff,#5fa05f 45%,#004400)"></div>
<div class="a" style="left:216px;top:325.5px;font-size:10px;color:#222">0</div>
<div class="a" style="left:292px;top:325.5px;font-size:10px;color:#222">79,266</div>
<div class="a" style="left:207px;top:350px;width:607px;height:1px;background:#dcdcdc"></div>
<div class="a" style="left:224px;top:359px;font-size:12.7px;color:#222">Report View by Selection</div>
<div class="a lnk" style="left:737px;top:359px;font-size:12.5px">Customize</div>
<div class="a" style="left:207px;top:381px;width:607px;height:1px;background:#dcdcdc"></div>

<!--TBL-->
<div class="a" style="left:207px;top:382px;width:603px;height:32px;background:#f4f4f4"></div>
<div class="a" style="left:218px;top:385px;font-size:12.7px;color:#222;line-height:14px">Total:</div>
<div class="a" style="left:225.5px;top:399px;font-size:12.7px;color:#222;line-height:14px">7</div>
<div class="a" style="left:275px;top:390.5px;font-size:12.7px;color:#222;line-height:14px">Research Fields</div>
<div class="a" style="left:384px;top:385px;width:100px;font-size:12.7px;color:#222;line-height:14px;text-align:center">Web of Science</div>
<div class="a" style="left:380px;top:399px;width:100px;font-size:12.7px;color:#222;line-height:14px;text-align:center">Documents</div>
<div class="a" style="left:524px;top:390.5px;font-size:12.7px;color:#222;line-height:14px;color:#4a78a8">Cites</div>
<svg class="a" style="left:556px;top:396px" width="7" height="4"><path d="M0 0H7L3.5 4Z" fill="#4a78a8"/></svg>
<div class="a" style="left:621px;top:390.5px;font-size:12.7px;color:#222;line-height:14px">Cites/Paper</div>
<div class="a" style="left:709px;top:385px;width:100px;font-size:12.7px;color:#222;line-height:14px;text-align:center">Highly Cited</div>
<div class="a" style="left:705px;top:399px;width:100px;font-size:12.7px;color:#222;line-height:14px;text-align:center">Papers</div>
<div class="a" style="left:207px;top:414px;width:603px;height:22px;background:#fafafa;border-bottom:1px solid #e4e4e4"></div>
<div class="a" style="left:206px;top:416px;width:50px;text-align:right;font-size:12px;color:#333;line-height:15px">1</div>
<div class="a lnk" style="left:275px;top:416px;font-size:11.8px;line-height:15px">CHEMISTRY</div>
<div class="a" style="left:383px;top:416px;width:100px;text-align:right;font-size:12px;color:#333;line-height:15px">1,944</div>
<div class="a" style="left:503px;top:416px;width:100px;text-align:right;font-size:12px;color:#333;line-height:15px">23,489</div>
<div class="a" style="left:604px;top:416px;width:100px;text-align:right;font-size:12px;color:#333;line-height:15px">12.08</div>
<div class="a" style="left:722px;top:416px;width:85px;height:16px;border:1px solid #5b8fd6;background:#dfe7f5;overflow:hidden"><div style="position:absolute;left:0;top:0;bottom:0;width:26px;background:linear-gradient(#97bbec,#7aa6e4 40%,#5b8fd8 55%,#4f86d4)"></div><div style="position:absolute;right:1px;top:3px;font-size:10px;line-height:12px;color:#556">7</div></div>
<div class="a" style="left:207px;top:436px;width:603px;height:30px;background:#fafafa;border-bottom:1px solid #e4e4e4"></div>
<div class="a" style="left:206px;top:442px;width:50px;text-align:right;font-size:12px;color:#333;line-height:15px">2</div>
<div class="a lnk" style="left:275px;top:439px;font-size:11.8px;line-height:11px">MATERIALS<br>SCIENCE</div>
<div class="a" style="left:383px;top:442px;width:100px;text-align:right;font-size:12px;color:#333;line-height:15px">1,201</div>
<div class="a" style="left:503px;top:442px;width:100px;text-align:right;font-size:12px;color:#333;line-height:15px">18,297</div>
<div class="a" style="left:604px;top:442px;width:100px;text-align:right;font-size:12px;color:#333;line-height:15px">15.23</div>
<div class="a" style="left:722px;top:442px;width:85px;height:16px;border:1px solid #5b8fd6;background:#dfe7f5;overflow:hidden"><div style="position:absolute;left:0;top:0;bottom:0;width:15px;background:linear-gradient(#97bbec,#7aa6e4 40%,#5b8fd8 55%,#4f86d4)"></div><div style="position:absolute;right:1px;top:3px;font-size:10px;line-height:12px;color:#556">4</div></div>
<div class="a" style="left:207px;top:466px;width:603px;height:21px;background:#fafafa;border-bottom:1px solid #e4e4e4"></div>
<div class="a" style="left:206px;top:468px;width:50px;text-align:right;font-size:12px;color:#333;line-height:15px">3</div>
<div class="a lnk" style="left:275px;top:468px;font-size:11.8px;line-height:15px">ENGINEERING</div>
<div class="a" style="left:383px;top:468px;width:100px;text-align:right;font-size:12px;color:#333;line-height:15px">1,568</div>
<div class="a" style="left:503px;top:468px;width:100px;text-align:right;font-size:12px;color:#333;line-height:15px">15,301</div>
<div class="a" style="left:604px;top:468px;width:100px;text-align:right;font-size:12px;color:#333;line-height:15px">9.76</div>
<div class="a" style="left:722px;top:468px;width:85px;height:16px;border:1px solid #5b8fd6;background:#dfe7f5;overflow:hidden"><div style="position:absolute;left:0;top:0;bottom:0;width:68px;background:linear-gradient(#97bbec,#7aa6e4 40%,#5b8fd8 55%,#4f86d4)"></div><div style="position:absolute;right:1px;top:3px;font-size:10px;line-height:12px;color:#556">18</div></div>
<div class="a" style="left:207px;top:487px;width:603px;height:30px;background:#fafafa;border-bottom:1px solid #e4e4e4"></div>
<div class="a" style="left:206px;top:494px;width:50px;text-align:right;font-size:12px;color:#333;line-height:15px">4</div>
<div class="a lnk" style="left:275px;top:490px;font-size:11.8px;line-height:11px">ENVIRONMENT/E<br>COLOGY</div>
<div class="a" style="left:383px;top:494px;width:100px;text-align:right;font-size:12px;color:#333;line-height:15px">807</div>
<div class="a" style="left:503px;top:494px;width:100px;text-align:right;font-size:12px;color:#333;line-height:15px">10,319</div>
<div class="a" style="left:604px;top:494px;width:100px;text-align:right;font-size:12px;color:#333;line-height:15px">12.79</div>
<div class="a" style="left:722px;top:493px;width:85px;height:16px;border:1px solid #5b8fd6;background:#dfe7f5;overflow:hidden"><div style="position:absolute;left:0;top:0;bottom:0;width:83px;background:linear-gradient(#97bbec,#7aa6e4 40%,#5b8fd8 55%,#4f86d4)"></div><div style="position:absolute;right:1px;top:3px;font-size:10px;line-height:12px;color:#fff">22</div></div>
<div class="a" style="left:207px;top:517px;width:603px;height:22px;background:#fafafa;border-bottom:1px solid #e4e4e4"></div>
<div class="a" style="left:206px;top:520px;width:50px;text-align:right;font-size:12px;color:#333;line-height:15px">5</div>
<div class="a lnk" style="left:275px;top:520px;font-size:11.8px;line-height:15px">GEOSCIENCES</div>
<div class="a" style="left:383px;top:520px;width:100px;text-align:right;font-size:12px;color:#333;line-height:15px">575</div>
<div class="a" style="left:503px;top:520px;width:100px;text-align:right;font-size:12px;color:#333;line-height:15px">6,810</div>
<div class="a" style="left:604px;top:520px;width:100px;text-align:right;font-size:12px;color:#333;line-height:15px">11.84</div>
<div class="a" style="left:722px;top:519px;width:85px;height:16px;border:1px solid #5b8fd6;background:#dfe7f5;overflow:hidden"><div style="position:absolute;left:0;top:0;bottom:0;width:26px;background:linear-gradient(#97bbec,#7aa6e4 40%,#5b8fd8 55%,#4f86d4)"></div><div style="position:absolute;right:1px;top:3px;font-size:10px;line-height:12px;color:#556">7</div></div>
<div class="a" style="left:207px;top:539px;width:603px;height:29px;background:#fafafa;border-bottom:1px solid #e4e4e4"></div>
<div class="a" style="left:206px;top:545px;width:50px;text-align:right;font-size:12px;color:#333;line-height:15px">6</div>
<div class="a lnk" style="left:275px;top:542px;font-size:11.8px;line-height:11px">COMPUTER<br>SCIENCE</div>
<div class="a" style="left:383px;top:545px;width:100px;text-align:right;font-size:12px;color:#333;line-height:15px">515</div>
<div class="a" style="left:503px;top:545px;width:100px;text-align:right;font-size:12px;color:#333;line-height:15px">5,005</div>
<div class="a" style="left:604px;top:545px;width:100px;text-align:right;font-size:12px;color:#333;line-height:15px">9.72</div>
<div class="a" style="left:722px;top:544px;width:85px;height:16px;border:1px solid #5b8fd6;background:#dfe7f5;overflow:hidden"><div style="position:absolute;left:0;top:0;bottom:0;width:11px;background:linear-gradient(#97bbec,#7aa6e4 40%,#5b8fd8 55%,#4f86d4)"></div><div style="position:absolute;right:1px;top:3px;font-size:10px;line-height:12px;color:#556">3</div></div>
<div class="a" style="left:207px;top:568px;width:603px;height:23px;background:#fafafa;border-bottom:1px solid #e4e4e4"></div>
<div class="a" style="left:206px;top:571px;width:50px;text-align:right;font-size:12px;color:#333;line-height:15px">0</div>
<div class="a lnk" style="left:275px;top:571px;font-size:11.8px;line-height:15px">ALL FIELDS</div>
<div class="a" style="left:383px;top:571px;width:100px;text-align:right;font-size:12px;color:#333;line-height:15px">9,559</div>
<div class="a" style="left:503px;top:571px;width:100px;text-align:right;font-size:12px;color:#333;line-height:15px">104,942</div>
<div class="a" style="left:604px;top:571px;width:100px;text-align:right;font-size:12px;color:#333;line-height:15px">10.98</div>
<div class="a" style="left:722px;top:570px;width:85px;height:16px;border:1px solid #5b8fd6;background:#dfe7f5;overflow:hidden"><div style="position:absolute;left:0;top:0;bottom:0;width:85px;background:linear-gradient(#97bbec,#7aa6e4 40%,#5b8fd8 55%,#4f86d4)"></div><div style="position:absolute;right:1px;top:3px;font-size:10px;line-height:12px;color:#fff">107</div></div>
<!--/TBL-->
</body></html>
